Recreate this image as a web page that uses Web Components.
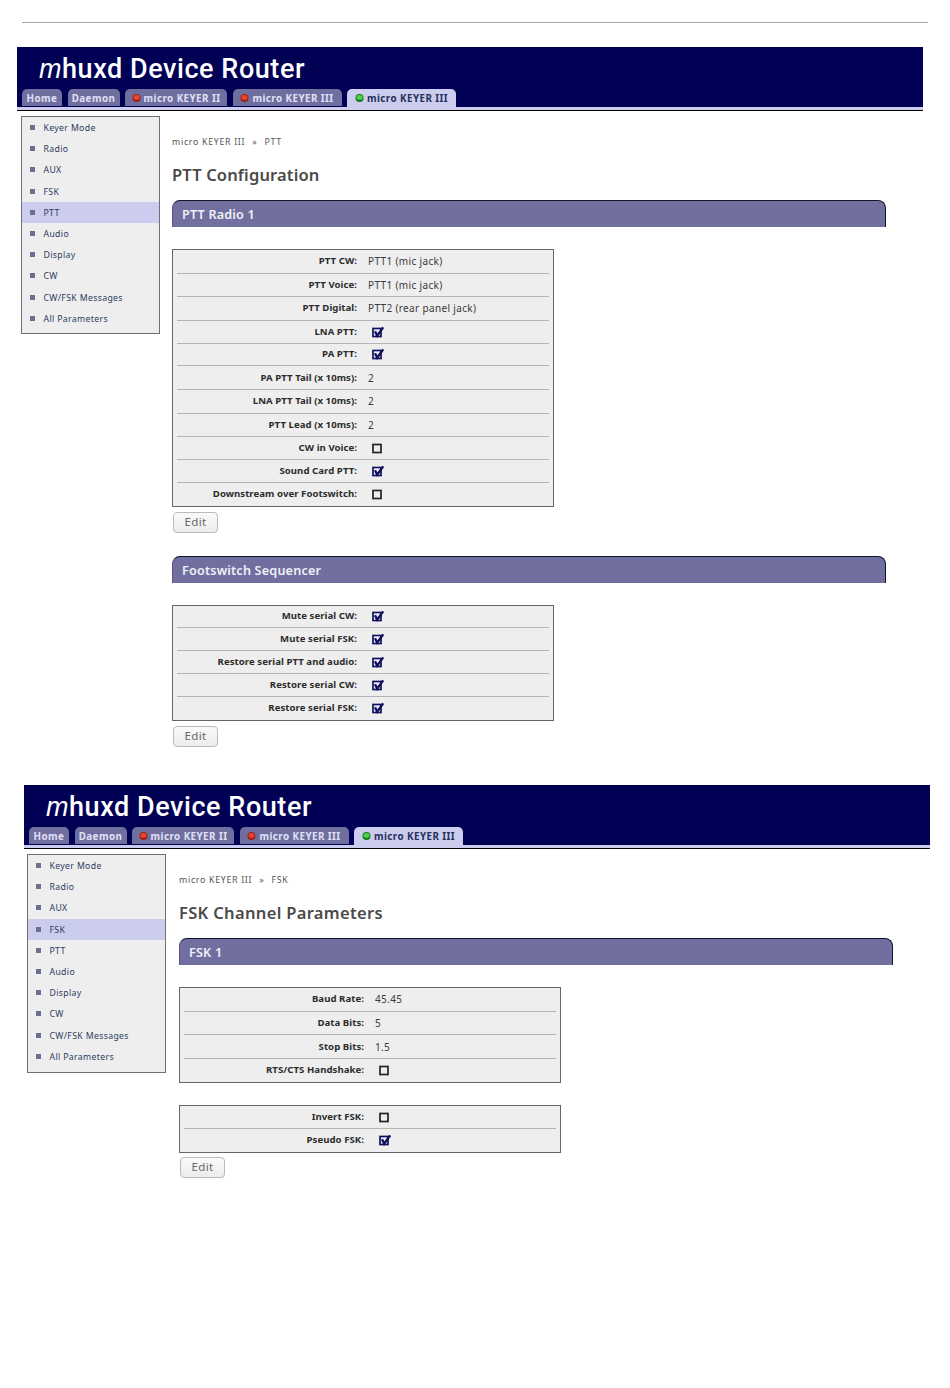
<!DOCTYPE html>
<html><head><meta charset="utf-8"><title>mhuxd</title>
<style>
html,body{margin:0;padding:0;background:#fff}
body{font-family:"DejaVu Sans",sans-serif;height:1388px;overflow:hidden}
</style></head><body>
<mh-page>
<mh-app left="17" navl="4" navb="4" ls=".15" active="PTT" crumb="PTT" title="PTT Configuration">
  <mh-section title="PTT Radio 1">
    <mh-table>
      <mh-row label="PTT CW:" value="PTT1 (mic jack)"></mh-row>
      <mh-row label="PTT Voice:" value="PTT1 (mic jack)"></mh-row>
      <mh-row label="PTT Digital:" value="PTT2 (rear panel jack)"></mh-row>
      <mh-row label="LNA PTT:" check="1"></mh-row>
      <mh-row label="PA PTT:" check="1"></mh-row>
      <mh-row label="PA PTT Tail (x 10ms):" value="2"></mh-row>
      <mh-row label="LNA PTT Tail (x 10ms):" value="2"></mh-row>
      <mh-row label="PTT Lead (x 10ms):" value="2"></mh-row>
      <mh-row label="CW in Voice:" check="0"></mh-row>
      <mh-row label="Sound Card PTT:" check="1"></mh-row>
      <mh-row label="Downstream over Footswitch:" check="0"></mh-row>
    </mh-table>
    <mh-edit></mh-edit>
  </mh-section>
  <mh-section title="Footswitch Sequencer" style="margin-top:23px">
    <mh-table>
      <mh-row label="Mute serial CW:" check="1"></mh-row>
      <mh-row label="Mute serial FSK:" check="1"></mh-row>
      <mh-row label="Restore serial PTT and audio:" check="1"></mh-row>
      <mh-row label="Restore serial CW:" check="1"></mh-row>
      <mh-row label="Restore serial FSK:" check="1"></mh-row>
    </mh-table>
    <mh-edit></mh-edit>
  </mh-section>
</mh-app>
<mh-app left="24" navl="3" navb="5" ls=".33" active="FSK" crumb="FSK" title="FSK Channel Parameters" style="margin-top:38.5px">
  <mh-section title="FSK 1">
    <mh-table style="height:96px">
      <mh-row label="Baud Rate:" value="45.45"></mh-row>
      <mh-row label="Data Bits:" value="5"></mh-row>
      <mh-row label="Stop Bits:" value="1.5"></mh-row>
      <mh-row label="RTS/CTS Handshake:" check="0"></mh-row>
    </mh-table>
    <mh-table style="margin-top:22px;height:48px">
      <mh-row label="Invert FSK:" check="0"></mh-row>
      <mh-row label="Pseudo FSK:" check="1"></mh-row>
    </mh-table>
    <mh-edit style="margin-top:4px"></mh-edit>
  </mh-section>
</mh-app>
</mh-page>
<script>
const UI='"Noto Sans","DejaVu Sans",sans-serif';
function shadow(el,html){el.attachShadow({mode:'open'}).innerHTML=html;}
customElements.define('mh-page',class extends HTMLElement{constructor(){super();shadow(this,`<style>
:host{display:block;padding-top:22px}
.rule{height:1px;background:#a8a8a8;margin:0 22px 24px 22px}
</style><div class="rule"></div><slot></slot>`);}});
customElements.define('mh-tab',class extends HTMLElement{constructor(){super();
 const led=this.getAttribute('led');
 const on=this.hasAttribute('on');
 const c=led==='g'?['#4fd24a','#137a16']:['#e8452f','#9c1f14'];
 shadow(this,`<style>
:host{display:block;width:${this.getAttribute('w')}px;height:${on?18:17}px;box-sizing:border-box;text-align:center;border-radius:5px 5px 0 0;background:${on?'#ccccee':'#6f6f9f'};color:${on?'#24305a':'#e0e0f6'};font:700 9.8px/19px ${UI};white-space:nowrap;letter-spacing:.45px}
svg{vertical-align:-1px;margin-right:3px}
</style>${led?`<svg width="9" height="10" viewBox="0 0 9 10" aria-hidden="true"><circle cx="4.5" cy="5" r="4" fill="${c[1]}"/><ellipse cx="4.5" cy="4.4" rx="3" ry="2.4" fill="${c[0]}"/></svg>`:''}<slot></slot>`);}});
customElements.define('mh-header',class extends HTMLElement{constructor(){super();shadow(this,`<style>
:host{display:block;background:#000055;height:60px;box-sizing:border-box;border-bottom:0;position:relative}
.t{font:500 27px/34px Roboto,sans-serif;color:#fff;padding:5px 0 0 22px;height:42px;box-sizing:border-box;letter-spacing:.55px;white-space:nowrap}
.t i{font-family:"Liberation Sans",sans-serif;font-weight:400}
.tabs{display:flex;gap:5.5px;padding-left:5px;height:18px;align-items:flex-start}
</style><div class="t"><i>m</i>huxd Device Router</div><div class="tabs"><slot></slot></div>`);}});
customElements.define('mh-nav',class extends HTMLElement{constructor(){super();
 const a=this.getAttribute('active');
 const items=['Keyer Mode','Radio','AUX','FSK','PTT','Audio','Display','CW','CW/FSK Messages','All Parameters'];
 shadow(this,`<style>
:host{display:block;width:139px;box-sizing:border-box;border:1px solid #707070;background:#eeeeee;padding-bottom:${this.getAttribute('b')}px;margin:5px 0 0 ${this.getAttribute('l')}px;flex:none;align-self:flex-start}
ul{list-style:none;margin:0;padding:0}
li{height:21.2px;padding-left:21.5px;position:relative;font:400 8.7px/23px ${UI};color:#2c3c60;letter-spacing:.35px;white-space:nowrap}
li::before{content:"";position:absolute;left:8px;top:8px;width:5px;height:5px;background:#6a7090}
li.a{background:#ccccee}
</style><ul>${items.map(i=>`<li class="${i===a?'a':''}">${i}</li>`).join('')}</ul>`);}});
customElements.define('mh-app',class extends HTMLElement{constructor(){super();
 const g=n=>this.getAttribute(n);
 shadow(this,`<style>
:host{display:block;width:906px;margin-left:${g('left')}px}
.s{height:3px;background:#ccccee}
.k{height:1px;background:#000}
.body{display:flex}
main{margin-left:${16-Number(g('navl'))}px;padding-top:25px;flex:1;min-width:0}
.c{font:400 8.8px/13px ${UI};color:#555;letter-spacing:.7px}
.c span{margin:0 7px}
h2{margin:10px 0 10px;font:600 16.5px/31px ${UI};color:#4a4a4a;letter-spacing:${g('ls')}px}
</style><mh-header>
<mh-tab w="40">Home</mh-tab><mh-tab w="52">Daemon</mh-tab><mh-tab w="102" led="r">micro KEYER II</mh-tab><mh-tab w="109" led="r">micro KEYER III</mh-tab><mh-tab w="109" led="g" on>micro KEYER III</mh-tab>
</mh-header><div class="s"></div><div class="k"></div>
<div class="body"><mh-nav l="${g('navl')}" b="${g('navb')}" active="${g('active')}"></mh-nav><main><div class="c">micro KEYER III<span>»</span>${g('crumb')}</div><h2>${g('title')}</h2><slot></slot></main></div>`);}});
customElements.define('mh-section',class extends HTMLElement{constructor(){super();shadow(this,`<style>
:host{display:block}
.b{width:714px;height:27px;box-sizing:border-box;background:#706f9f;border:1px solid #15152a;border-bottom:0;border-left-color:#55557f;border-radius:8px 8px 0 0;color:#f0f0f8;font:600 12.6px/27px ${UI};padding-left:9px;margin-bottom:22px;letter-spacing:.2px}
</style><div class="b">${this.getAttribute('title')}</div><slot></slot>`);}});
customElements.define('mh-table',class extends HTMLElement{constructor(){super();shadow(this,`<style>
:host{display:block;width:382px;box-sizing:border-box;border:1px solid #666;background:#eeeeee;padding:0 4px}
::slotted(mh-row:last-child){border-bottom:0}
</style><slot></slot>`);}});
customElements.define('mh-row',class extends HTMLElement{constructor(){super();
 const g=n=>this.getAttribute(n);
 const chk=g('check');
 const box=chk===null?`<span class="v">${g('value')}</span>`:`<svg class="x" width="13" height="12" viewBox="0 0 13 12" aria-hidden="true"><rect x="1" y="2.5" width="8" height="8" fill="${chk==='1'?'#f4f4f8':'none'}" stroke="${chk==='1'?'#101060':'#222'}" stroke-width="1.7"/>${chk==='1'?'<path d="M3 5.2 L5.2 9.6 L11.2 1.4" fill="none" stroke="#101060" stroke-width="2.4"/>':''}</svg>`;
 shadow(this,`<style>
:host{display:grid;grid-template-columns:180px 1fr;column-gap:11px;align-items:center;height:${chk===null?23.6:22.8}px;box-sizing:border-box;border-bottom:1px solid #b4b4b4;font-size:9.5px;white-space:nowrap}
.l{font:700 9.6px/18px ${UI};color:#2c2c2c;text-align:right;letter-spacing:.05px}
.v{font:400 10px/18px ${UI};color:#3a3a3a;letter-spacing:.35px}
.x{margin-left:4px;display:block}
</style><span class="l">${g('label')}</span>${box}`);}});
customElements.define('mh-edit',class extends HTMLElement{constructor(){super();shadow(this,`<style>
:host{display:block;width:45px;height:21px;box-sizing:border-box;margin:5px 0 0 1px;border:1px solid #bbb;border-radius:4px;background:linear-gradient(#fafafa,#ececec);color:#666;font:400 11.5px/18px ${UI};text-align:center;letter-spacing:.3px}
</style>Edit`);}});
</script>
</body></html>
